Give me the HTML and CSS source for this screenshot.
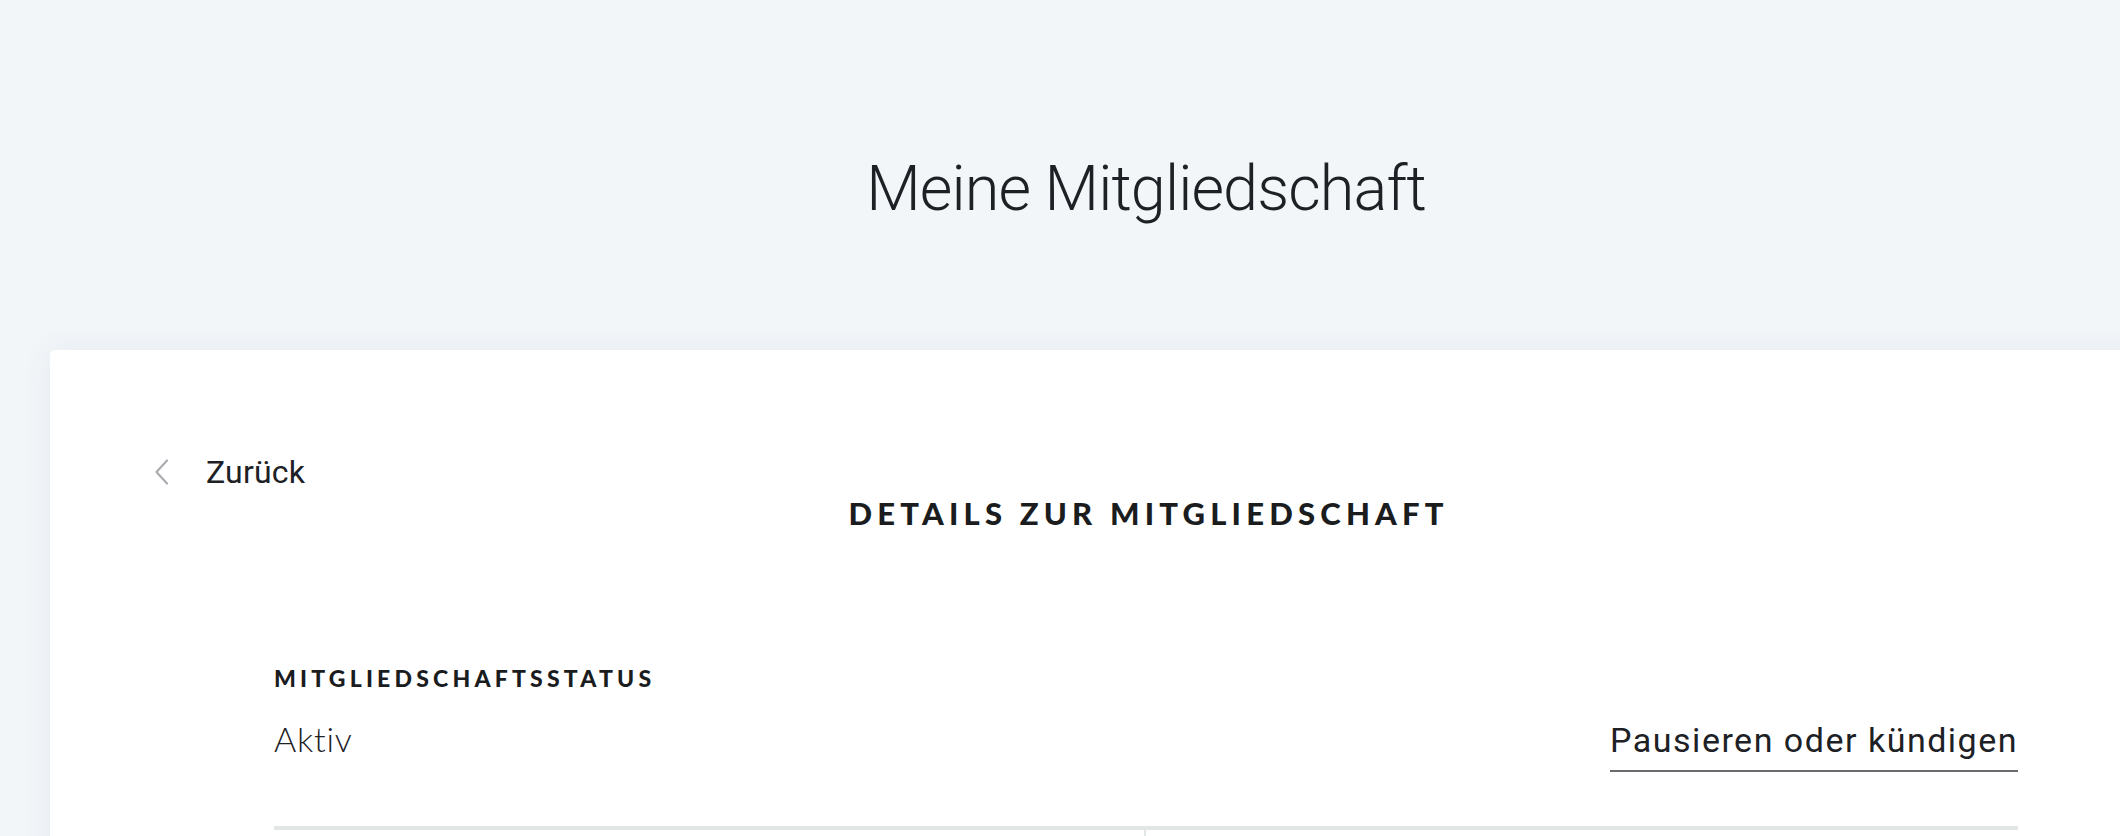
FILE: index.html
```html
<!DOCTYPE html>
<html lang="de">
<head>
<meta charset="utf-8">
<title>Meine Mitgliedschaft</title>
<link rel="stylesheet" href="styles.css">
</head>
<body>
<div class="page">
  <header class="hero">
    <h1 class="hero-title">Meine Mitgliedschaft</h1>
  </header>
  <main class="card">
    <a class="back" href="#">
      <svg class="back-icon" width="16" height="26" viewBox="0 0 16 26" aria-hidden="true">
        <path d="M13 1.5 L2.5 13 L13 24.5" fill="none" stroke="#a9acb0" stroke-width="2.2" stroke-linecap="round" stroke-linejoin="round"/>
      </svg>
      <span class="back-label">Zurück</span>
    </a>
    <h2 class="card-title">DETAILS ZUR MITGLIEDSCHAFT</h2>
    <section class="section">
      <h3 class="label">MITGLIEDSCHAFTSSTATUS</h3>
      <div class="status-row">
        <span class="status">Aktiv</span>
        <a class="action" href="#">Pausieren oder kündigen</a>
      </div>
      <div class="divider"></div>
      <div class="columns">
        <div class="col col-left"></div>
        <div class="col col-right"></div>
      </div>
    </section>
  </main>
</div>
</body>
</html>
```

FILE: styles.css
```css
html, body {
  margin: 0;
  padding: 0;
  overflow: hidden;
  background: #f3f6f9;
}

.page {
  width: 2292px;
  font-family: Roboto, "Liberation Sans", sans-serif;
  color: #1d2125;
}

.hero {
  height: 350px;
  box-sizing: border-box;
  padding-top: 157px;
  text-align: center;
}

.hero-title {
  margin: 0;
  font-family: Roboto, sans-serif;
  font-weight: 300;
  font-size: 63px;
  line-height: 63px;
  letter-spacing: -0.9px;
  color: #1d2125;
}

.card {
  display: block;
  margin: 0 50px;
  min-height: 600px;
  background: #ffffff;
  border-radius: 5px;
  box-shadow: 0 0 30px rgba(40, 60, 90, 0.07);
  padding: 106px 224px 0;
}

.back {
  display: flex;
  align-items: center;
  margin-left: -120px;
  text-decoration: none;
  color: #1d2125;
  height: 32px;
}

.back-icon {
  display: block;
  margin-right: 36px;
}

.back-label {
  font-family: Roboto, sans-serif;
  font-size: 32px;
  line-height: 32px;
  letter-spacing: 0.2px;
}

.card-title {
  margin: 10px 0 0;
  text-align: center;
  font-family: Lato, sans-serif;
  font-weight: 900;
  font-size: 31px;
  line-height: 31px;
  letter-spacing: 5.2px;
  text-indent: 5.2px;
  color: #1a1c1e;
}

.section {
  margin-top: 138px;
}

.label {
  margin: 0;
  font-family: Lato, sans-serif;
  font-weight: 900;
  font-size: 23px;
  line-height: 23px;
  letter-spacing: 4.2px;
  color: #1a1c1e;
}

.status-row {
  display: flex;
  justify-content: space-between;
  align-items: baseline;
  margin-top: 32px;
}

.status {
  font-family: Lato, sans-serif;
  font-weight: 300;
  font-size: 34px;
  line-height: 34px;
  letter-spacing: 0.8px;
  color: #1d2125;
}

.action {
  font-family: Roboto, sans-serif;
  font-size: 34px;
  line-height: 34px;
  letter-spacing: 1.5px;
  color: #1d2125;
  text-decoration: none;
  padding-bottom: 13px;
  border-bottom: 2px solid #6b6b70;
}

.divider {
  margin-top: 54px;
  height: 4px;
  background: #e2e6e5;
}

.columns {
  display: grid;
  grid-template-columns: 1fr 1fr;
  min-height: 200px;
}

.col-left {
  border-right: 2px solid #e2e6e5;
}
```
